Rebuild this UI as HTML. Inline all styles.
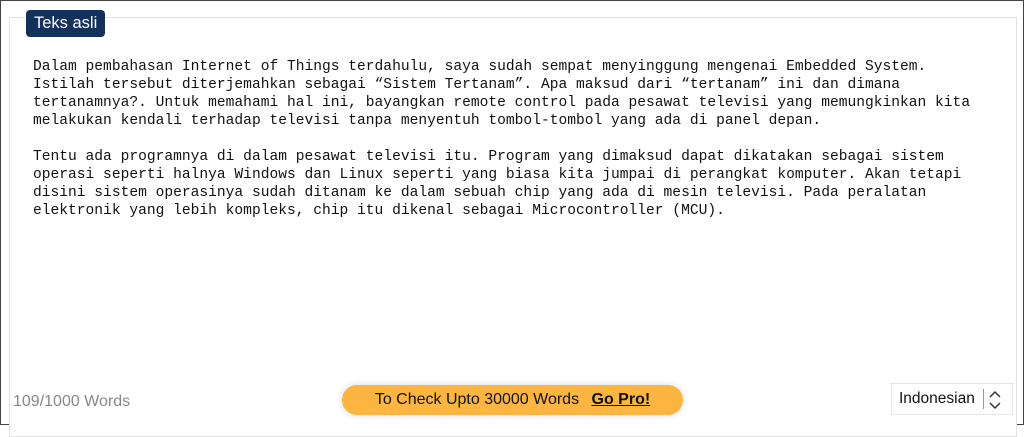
<!DOCTYPE html>
<html><head><style>
body{margin:0;width:1024px;height:425px;background:#fff;position:relative;overflow:hidden;border:1px solid #444;box-sizing:border-box;font-family:"Liberation Sans",sans-serif}
.panel{position:absolute;left:8px;top:16px;width:1008px;height:420px;border:1px solid #e2e2e2;box-sizing:border-box;background:#fff}
.tag{position:absolute;left:25px;top:9px;height:27px;padding:0 8px;background:#13315c;color:#fff;border-radius:4px;font-size:16.5px;line-height:27px}
.txt{position:absolute;left:32px;top:57px;font-family:"Liberation Mono",monospace;font-size:14.6px;line-height:18px;color:#111;white-space:pre}
.wc{position:absolute;left:12px;top:392px;font-size:16px;color:#888}
.pro{position:absolute;left:341px;top:384px;width:341px;height:30px;border-radius:15px;background:#fbb540;box-shadow:0 0 8px rgba(0,0,0,.15);font-size:16px;line-height:30px;text-align:center;color:#111}
.pro b{text-decoration:underline;margin-left:8px}
.sel{position:absolute;left:890px;top:382px;width:122px;height:32px;border:1px solid #e6e6e6;box-sizing:border-box;font-size:15.5px;line-height:30px;padding-left:7px;color:#111}
.sel svg{position:absolute;left:96px;top:5px}
.sel i{position:absolute;left:91px;top:5px;width:1px;height:20px;background:#999}
</style></head><body>
<div class="panel"></div>
<div class="tag">Teks asli</div>
<div class="txt">Dalam pembahasan Internet of Things terdahulu, saya sudah sempat menyinggung mengenai Embedded System.
Istilah tersebut diterjemahkan sebagai “Sistem Tertanam”. Apa maksud dari “tertanam” ini dan dimana
tertanamnya?. Untuk memahami hal ini, bayangkan remote control pada pesawat televisi yang memungkinkan kita
melakukan kendali terhadap televisi tanpa menyentuh tombol-tombol yang ada di panel depan.

Tentu ada programnya di dalam pesawat televisi itu. Program yang dimaksud dapat dikatakan sebagai sistem
operasi seperti halnya Windows dan Linux seperti yang biasa kita jumpai di perangkat komputer. Akan tetapi
disini sistem operasinya sudah ditanam ke dalam sebuah chip yang ada di mesin televisi. Pada peralatan
elektronik yang lebih kompleks, chip itu dikenal sebagai Microcontroller (MCU).</div>
<div class="wc">109/1000 Words</div>
<div class="pro">To Check Upto 30000 Words <b>Go Pro!</b></div>
<div class="sel">Indonesian<i></i><svg width="14" height="22" viewBox="0 0 14 22"><path d="M2 8L7 3L12 8M2 14L7 19L12 14" fill="none" stroke="#333" stroke-width="1.5"/></svg></div>
</body></html>
